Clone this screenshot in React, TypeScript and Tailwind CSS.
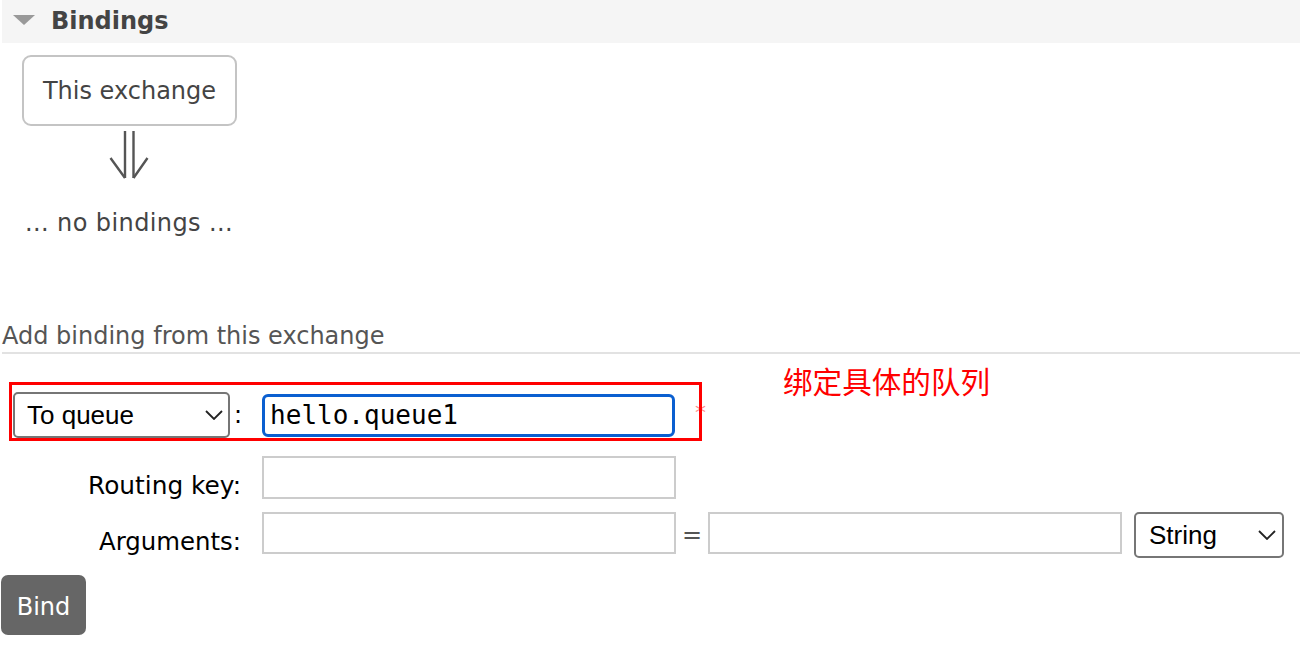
function Chevron({ className }: { className: string }) {
  return (
    <svg className={className} width="18" height="10" viewBox="0 0 18 10" fill="none">
      <path d="M1 1 L9 9 L17 1" stroke="#222" strokeWidth="1.8" />
    </svg>
  );
}

function FakeSelect({ label, width, padLeft, chevronLeft }: { label: string; width: string; padLeft: string; chevronLeft: string }) {
  return (
    <div className={`relative ${width} h-[46px] shrink-0`}>
      <select
        defaultValue={label}
        className={`appearance-none w-full h-full border-2 border-[#767676] rounded-[5px] bg-white text-black ${padLeft} font-['Liberation_Sans',Arial,sans-serif] text-[26px] outline-none`}
      >
        <option>{label}</option>
      </select>
      <Chevron className={`absolute top-[18px] ${chevronLeft} pointer-events-none`} />
    </div>
  );
}

export default function App() {
  return (
    <div className="relative w-[1300px] h-[664px] overflow-hidden bg-white font-['DejaVu_Sans',Verdana,sans-serif] text-[24px] leading-[28px] text-[#444]">
      {/* section header */}
      <div className="ml-[2px] h-[43px] bg-[#f5f5f5] flex items-start">
        <svg className="ml-[11px] mt-[15px]" width="22" height="10" viewBox="0 0 22 10">
          <polygon points="0,0 22,0 11,10" fill="#999" />
        </svg>
        <h2 className="ml-[16px] mt-[7px] font-bold text-[24px] leading-[28px] text-[#444]">Bindings</h2>
      </div>

      <div className="ml-[22px] mt-[12px] w-[215px] h-[71px] border-2 border-[#c4c4c4] rounded-[9px] flex items-center justify-center pt-[1px]">
        This exchange
      </div>

      <svg className="block ml-[109px] mt-[5px]" width="40" height="48" viewBox="0 0 40 48" fill="none">
        <path d="M16 0 V47 M24.5 0 V47" stroke="#555" strokeWidth="2.4" />
        <path d="M1.5 27 L16 47 M38.5 27 L24.5 47" stroke="#555" strokeWidth="2.4" />
      </svg>

      <p className="ml-[25px] mt-[30px] tracking-[0.4px]">... no bindings ...</p>

      <h3 className="ml-[2px] mt-[85px] text-[#555]">Add binding from this exchange</h3>
      <div className="ml-[2px] mt-[2px] h-[2px] bg-[#e2e2e2]" />

      {/* form */}
      <div className="mt-[38px] flex flex-col">
        <div className="flex items-center h-[46px]">
          <div className="ml-[13px]">
            <FakeSelect label="To queue" width="w-[217px]" padLeft="pl-[12px]" chevronLeft="left-[192px]" />
          </div>
          <span className="ml-[4px] text-black">:</span>
          <input
            defaultValue="hello.queue1"
            className="ml-[20px] w-[413px] h-[43px] border-[3px] border-[#0b5fd0] rounded-[6px] pl-[5px] font-['DejaVu_Sans_Mono',monospace] text-[26px] text-black outline-none"
          />
          <span className="ml-[20px] self-start mt-[10px] text-[22px] leading-[22px] text-[#f88]">*</span>
        </div>

        <div className="mt-[18px] flex items-start">
          <label className="w-[241px] mt-[16px] text-right text-black text-[24.8px]">Routing key:</label>
          <input className="ml-[21px] w-[414px] h-[43px] border-2 border-[#ccc] outline-none" />
        </div>

        <div className="mt-[12px] flex items-start">
          <label className="w-[241px] mt-[16px] text-right text-black text-[24.4px]">Arguments:</label>
          <input className="ml-[21px] w-[414px] h-[42px] border-2 border-[#ccc] outline-none" />
          <span className="ml-[6px] mt-[9px] w-[20px] text-[#555]">=</span>
          <input className="ml-[6px] w-[414px] h-[42px] border-2 border-[#ccc] outline-none" />
          <div className="ml-[12px]">
            <FakeSelect label="String" width="w-[150px]" padLeft="pl-[13px]" chevronLeft="left-[124px]" />
          </div>
        </div>

        <button className="ml-[1px] mt-[17px] w-[85px] h-[60px] pt-[3px] bg-[#666] rounded-[7px] text-white text-[24px]">Bind</button>
      </div>

      {/* annotation */}
      <div className="absolute left-[9px] top-[382px] w-[693px] h-[59px] border-[3px] border-[#f00] pointer-events-none" />
      <div className="absolute left-[783px] top-[366px] text-[29.6px] leading-[30px] text-[#f00] font-['Noto_Sans_CJK_SC',sans-serif]">
        绑定具体的队列
      </div>
    </div>
  );
}
